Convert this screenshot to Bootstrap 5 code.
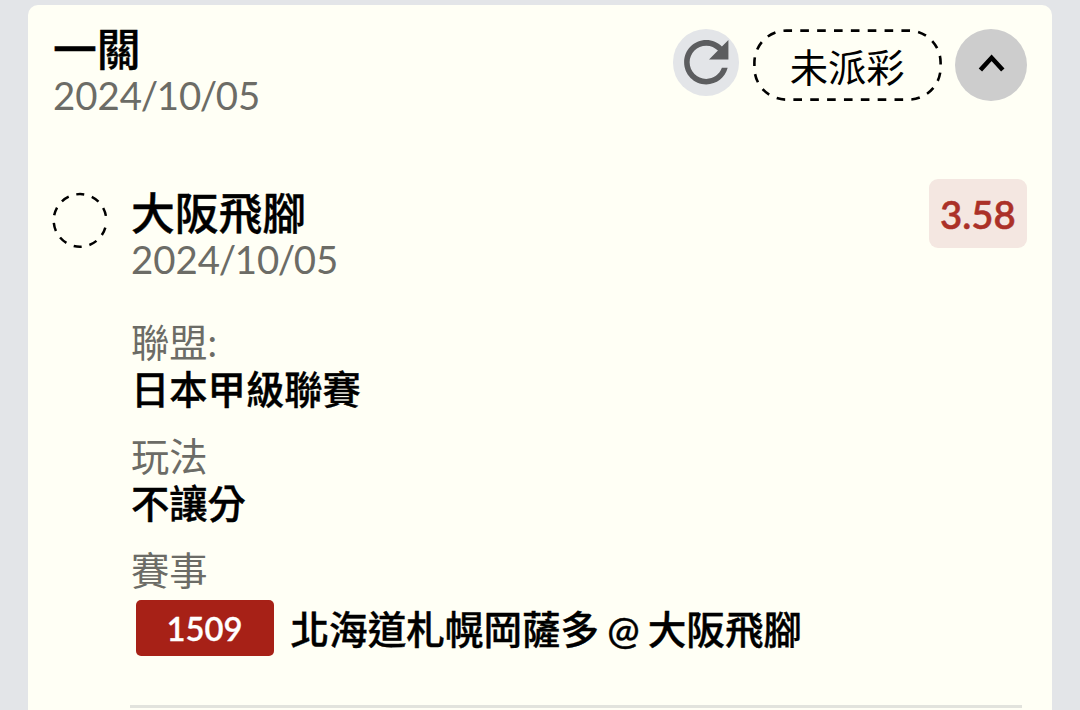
<!DOCTYPE html>
<html lang="zh-Hant">
<head>
  <meta charset="UTF-8" />
  <meta name="viewport" content="width=device-width, initial-scale=1.0" />
  <title>一關</title>
  <link
    href="https://cdn.jsdelivr.net/npm/bootstrap@5.3.2/dist/css/bootstrap.min.css"
    rel="stylesheet"
  />
  <style>
    body {
      background-color: #e3e5e8;
      color: #000;
      font-family: Lato, "Noto Sans CJK TC", sans-serif;
      font-size: 38.3px;
      line-height: 47px;
      overflow: hidden;
    }
    .ticket {
      margin: 4.5px 28px 0 27.5px;
      padding: 24.9px 24.8px 0 25.5px;
      height: 740px;
      border: 0;
      border-radius: 10px;
      background-color: #fffff5;
      color: #000;
    }
    .ticket-top { height: 150px; }
    .ticket-title {
      font-size: 43.8px;
      font-weight: 500;
      line-height: 46px;
      margin-top: -3px;
      -webkit-text-stroke: .4px #000;
    }
    .ticket-date { font-size: 38.4px; line-height: 46px; color: #6c6c66; }
    .ticket-date i { font-style: normal; margin: 0 -1.4px; }
    .refresh-btn { width: 66.5px; height: 66.5px; background-color: #e3e5e8; }
    .status-pill { width: 189px; height: 72px; margin-left: 13.5px; padding-top: 4px; }
    .toggle-btn { width: 72px; height: 72px; margin-left: 13.5px; background-color: #cdcdcd; }
    .pick-mark { width: 56px; height: 56px; margin: 13px 23px 0 -1px; }
    .pick-name { padding-top: 13.8px; }
    .odds {
      width: 98.5px;
      height: 69px;
      padding-top: 2px;
      border-radius: 9px;
      background-color: #f4e7e1;
      color: #ab3128;
      font-size: 38.3px;
      font-weight: 600;
      -webkit-text-stroke: .5px #ab3128;
    }
    .info-list { padding-top: 36.6px; }
    .info-label { color: #6c6c66; }
    .info-value { font-weight: 500; margin-bottom: 20px; -webkit-text-stroke: .4px #000; }
    .match-row { margin-top: 6.3px; }
    .match-no {
      width: 138px;
      height: 55.5px;
      margin: 0 17px 0 4.5px;
      padding-top: 1px;
      border-radius: 5px;
      background-color: #a72117;
      color: #fff;
      font-size: 32.8px;
      font-weight: 600;
      -webkit-text-stroke: .3px #fff;
    }
    .match-teams { font-size: 38.6px; word-spacing: -1.6px; padding-top: 4px; }
    .divider { height: 2.5px; margin: 49.5px 5px 0 77px; background-color: #e2e3dd; }
  </style>
</head>
<body>
  <div class="card ticket">
    <div class="ticket-top d-flex justify-content-between align-items-start">
      <div>
        <div class="ticket-title">一關</div>
        <div class="ticket-date">2024<i>/</i>10<i>/</i>05</div>
      </div>
      <div class="d-flex align-items-start">
        <button type="button" class="refresh-btn btn p-0 border-0 rounded-circle d-flex">
          <svg width="66.5" height="66.5" viewBox="0 0 24 24" fill="#5c5d5f">
            <path d="M17.65 6.35C16.2 4.9 14.21 4 12 4c-4.42 0-7.99 3.58-7.99 8s3.57 8 7.99 8c3.73 0 6.84-2.55 7.73-6h-2.08c-.82 2.33-3.04 4-5.65 4-3.31 0-6-2.69-6-6s2.69-6 6-6c1.66 0 3.14.69 4.22 1.78L13 11h7V4l-2.35 2.35z" />
          </svg>
        </button>
        <div class="status-pill position-relative d-flex align-items-center justify-content-center">
          <svg class="position-absolute top-0 start-0" width="189" height="72" fill="none" stroke="#000" stroke-width="2.6">
            <rect x="1.4" y="1.6" width="186.2" height="69" rx="32" pathLength="459" stroke-dasharray="8.7 8.3" stroke-dashoffset="3" />
          </svg>
          <span>未派彩</span>
        </div>
        <button type="button" class="toggle-btn btn p-0 border-0 rounded-circle d-flex">
          <svg width="72" height="72" fill="none" stroke="#000" stroke-width="4.6">
            <path d="M25.4 41 36.6 28.8 47.8 41" />
          </svg>
        </button>
      </div>
    </div>

    <div class="d-flex align-items-start">
      <svg class="pick-mark flex-shrink-0" fill="none" stroke="#000" stroke-width="2.5">
        <circle cx="28" cy="28.4" r="26.3" stroke-dasharray="8.2 7.8" stroke-dashoffset="-7.3" />
      </svg>
      <div class="flex-grow-1">
        <div class="d-flex justify-content-between align-items-start">
          <div class="pick-name">
            <div class="ticket-title">大阪飛腳</div>
            <div class="ticket-date">2024<i>/</i>10<i>/</i>05</div>
          </div>
          <div class="odds d-flex align-items-center justify-content-center">3.58</div>
        </div>
        <div class="info-list">
          <div class="info-label">聯盟:</div>
          <div class="info-value">日本甲級聯賽</div>
          <div class="info-label">玩法</div>
          <div class="info-value">不讓分</div>
          <div class="info-label">賽事</div>
        </div>
        <div class="match-row d-flex align-items-center">
          <span class="match-no d-flex align-items-center justify-content-center">1509</span>
          <span class="info-value match-teams mb-0">北海道札幌岡薩多 @ 大阪飛腳</span>
        </div>
      </div>
    </div>
    <div class="divider"></div>
  </div>
  <script src="https://cdn.jsdelivr.net/npm/bootstrap@5.3.2/dist/js/bootstrap.bundle.min.js"></script>
</body>
</html>
